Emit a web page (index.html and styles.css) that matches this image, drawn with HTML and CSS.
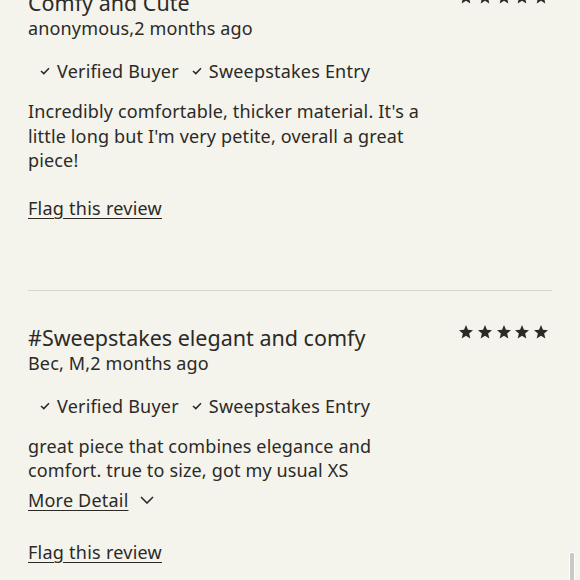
FILE: index.html
```html
<!DOCTYPE html>
<html>
<head>
<meta charset="utf-8">
<link rel="stylesheet" href="styles.css">
</head>
<body>
<div class="reviews">
  <article class="review">
    <div class="review-head">
      <div class="who">
        <h3 class="title">Comfy and Cute</h3>
        <div class="author">anonymous,2 months ago</div>
      </div>
      <div class="stars">
        <svg viewBox="0 0 24 24"><polygon points="12,1.5 14.9,8.6 22.5,9.2 16.7,14.1 18.5,21.6 12,17.6 5.5,21.6 7.3,14.1 1.5,9.2 9.1,8.6"/></svg>
        <svg viewBox="0 0 24 24"><polygon points="12,1.5 14.9,8.6 22.5,9.2 16.7,14.1 18.5,21.6 12,17.6 5.5,21.6 7.3,14.1 1.5,9.2 9.1,8.6"/></svg>
        <svg viewBox="0 0 24 24"><polygon points="12,1.5 14.9,8.6 22.5,9.2 16.7,14.1 18.5,21.6 12,17.6 5.5,21.6 7.3,14.1 1.5,9.2 9.1,8.6"/></svg>
        <svg viewBox="0 0 24 24"><polygon points="12,1.5 14.9,8.6 22.5,9.2 16.7,14.1 18.5,21.6 12,17.6 5.5,21.6 7.3,14.1 1.5,9.2 9.1,8.6"/></svg>
        <svg viewBox="0 0 24 24"><polygon points="12,1.5 14.9,8.6 22.5,9.2 16.7,14.1 18.5,21.6 12,17.6 5.5,21.6 7.3,14.1 1.5,9.2 9.1,8.6"/></svg>
      </div>
    </div>
    <ul class="badges">
      <li><svg class="check" viewBox="0 0 10 8"><polyline points="1,4 3.8,6.6 9,1.2"/></svg>Verified Buyer</li>
      <li><svg class="check" viewBox="0 0 10 8"><polyline points="1,4 3.8,6.6 9,1.2"/></svg>Sweepstakes Entry</li>
    </ul>
    <p class="body">Incredibly comfortable, thicker material. It's a little long but I'm very petite, overall a great piece!</p>
    <a class="flag" href="#">Flag this review</a>
  </article>

  <article class="review">
    <div class="review-head">
      <div class="who">
        <h3 class="title">#Sweepstakes elegant and comfy</h3>
        <div class="author">Bec, M,2 months ago</div>
      </div>
      <div class="stars">
        <svg viewBox="0 0 24 24"><polygon points="12,1.5 14.9,8.6 22.5,9.2 16.7,14.1 18.5,21.6 12,17.6 5.5,21.6 7.3,14.1 1.5,9.2 9.1,8.6"/></svg>
        <svg viewBox="0 0 24 24"><polygon points="12,1.5 14.9,8.6 22.5,9.2 16.7,14.1 18.5,21.6 12,17.6 5.5,21.6 7.3,14.1 1.5,9.2 9.1,8.6"/></svg>
        <svg viewBox="0 0 24 24"><polygon points="12,1.5 14.9,8.6 22.5,9.2 16.7,14.1 18.5,21.6 12,17.6 5.5,21.6 7.3,14.1 1.5,9.2 9.1,8.6"/></svg>
        <svg viewBox="0 0 24 24"><polygon points="12,1.5 14.9,8.6 22.5,9.2 16.7,14.1 18.5,21.6 12,17.6 5.5,21.6 7.3,14.1 1.5,9.2 9.1,8.6"/></svg>
        <svg viewBox="0 0 24 24"><polygon points="12,1.5 14.9,8.6 22.5,9.2 16.7,14.1 18.5,21.6 12,17.6 5.5,21.6 7.3,14.1 1.5,9.2 9.1,8.6"/></svg>
      </div>
    </div>
    <ul class="badges">
      <li><svg class="check" viewBox="0 0 10 8"><polyline points="1,4 3.8,6.6 9,1.2"/></svg>Verified Buyer</li>
      <li><svg class="check" viewBox="0 0 10 8"><polyline points="1,4 3.8,6.6 9,1.2"/></svg>Sweepstakes Entry</li>
    </ul>
    <p class="body">great piece that combines elegance and comfort. true to size, got my usual XS</p>
    <a class="more" href="#"><span class="more-text">More Detail</span><svg class="chev" viewBox="0 0 14 8"><polyline points="1,1 7,7 13,1"/></svg></a>
    <a class="flag" href="#">Flag this review</a>
  </article>
</div>
<div class="scrollbar"></div>
</body>
</html>
```

FILE: styles.css
```css
html, body {
  margin: 0;
  padding: 0;
  background: #f4f3ec;
  height: 100%;
  overflow: hidden;
}
body {
  font-family: "Noto Sans", sans-serif;
  color: #2b2a27;
  position: relative;
}
.reviews {
  margin-top: -10px;
  padding: 0 28px;
}
.review {
  display: flex;
  flex-direction: column;
  align-items: flex-start;
  padding-bottom: 70px;
}
.review + .review {
  border-top: 1px solid #d6d5ce;
  padding-top: 34px;
}
.review-head {
  display: flex;
  justify-content: space-between;
  align-items: flex-start;
  width: 100%;
}
.title {
  margin: 0;
  font-size: 21.5px;
  font-weight: 400;
  line-height: 26px;
}
.author {
  font-size: 18px;
  line-height: 24px;
  letter-spacing: 0.15px;
}
.stars {
  display: flex;
  gap: 2.7px;
  margin-top: -1px;
  margin-right: 3px;
}
.stars svg {
  width: 16px;
  height: 16px;
  fill: #2b2a27;
}
.badges {
  list-style: none;
  margin: 19px 0 0 12px;
  padding: 0;
  display: flex;
  gap: 13px;
  font-size: 18px;
  line-height: 24px;
  letter-spacing: 0.2px;
}
.badges li {
  display: flex;
  align-items: center;
  gap: 7px;
}
.check {
  width: 10px;
  height: 8px;
  fill: none;
  stroke: #2b2a27;
  stroke-width: 1.5;
}
.body {
  margin: 16px 0 0;
  font-size: 18px;
  line-height: 24.5px;
  letter-spacing: 0.15px;
  max-width: 400px;
}
.more {
  display: flex;
  align-items: center;
  gap: 11px;
  margin-top: 5px;
  font-size: 18px;
  line-height: 24px;
  letter-spacing: 0.2px;
  color: #2b2a27;
  text-decoration: none;
}
.more-text {
  text-decoration: underline;
  text-underline-offset: 3px;
  text-decoration-thickness: 1px;
}
.chev {
  width: 14px;
  height: 8px;
  fill: none;
  stroke: #2b2a27;
  stroke-width: 1.6;
}
.flag {
  margin-top: 23px;
  font-size: 18px;
  line-height: 24px;
  letter-spacing: 0.25px;
  color: #2b2a27;
  text-decoration: underline;
  text-underline-offset: 3px;
  text-decoration-thickness: 1px;
}
.more + .flag {
  margin-top: 28px;
}
.scrollbar {
  position: absolute;
  right: 5px;
  top: 552px;
  width: 4px;
  height: 40px;
  background: #c9c9c6;
  border: 1px solid #ffffff;
  border-radius: 2px;
}
```
